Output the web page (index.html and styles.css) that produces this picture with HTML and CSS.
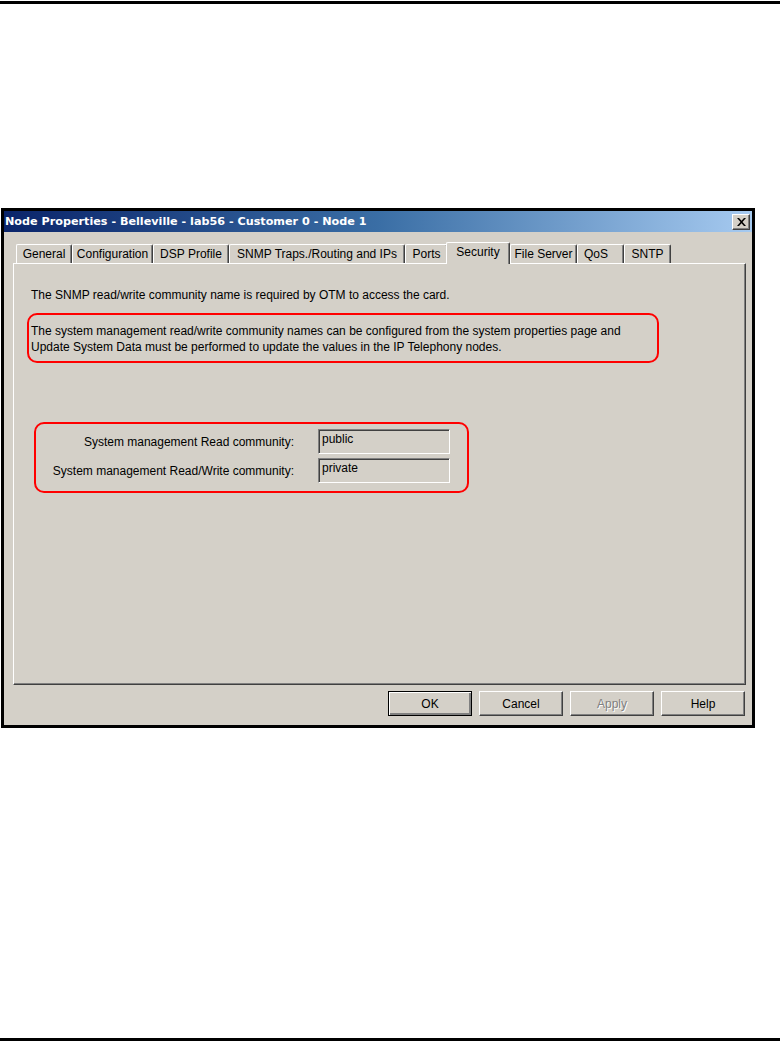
FILE: index.html
```html
<!DOCTYPE html>
<html>
<head>
<meta charset="utf-8">
<link rel="stylesheet" href="styles.css">
</head>
<body>
<div class="rule rule-top"></div>
<div class="dialog">
  <div class="titlebar">
    <span class="title">Node Properties - Belleville - lab56 - Customer 0 - Node 1</span>
    <span class="close-btn"><svg width="9" height="8" viewBox="0 0 9 8"><path d="M0 0h2l2.5 2.8L7 0h2L5.5 4 9 8H7L4.5 5.2 2 8H0l3.5-4z" fill="#000"/></svg></span>
  </div>
  <div class="dialog-body">
    <div class="tabs">
      <div class="tab">General</div>
      <div class="tab">Configuration</div>
      <div class="tab">DSP Profile</div>
      <div class="tab">SNMP Traps./Routing and IPs</div>
      <div class="tab">Ports</div>
      <div class="tab tab-active">Security</div>
      <div class="tab">File Server</div>
      <div class="tab tab-left">QoS</div>
      <div class="tab">SNTP</div>
    </div>
    <div class="panel">
      <p class="intro">The SNMP read/write community name is required by OTM to access the card.</p>
      <div class="note">
        <p>The system management read/write community names can be configured from the system properties page and</p>
        <p>Update System Data must be performed to update the values in the IP Telephony nodes.</p>
      </div>
      <div class="fields">
        <div class="field">
          <span class="label">System management Read community:</span>
          <span class="input">public</span>
        </div>
        <div class="field">
          <span class="label">System management Read/Write community:</span>
          <span class="input">private</span>
        </div>
      </div>
    </div>
    <div class="buttons">
      <span class="btn btn-default">OK</span>
      <span class="btn">Cancel</span>
      <span class="btn btn-disabled">Apply</span>
      <span class="btn">Help</span>
    </div>
  </div>
</div>
<div class="rule rule-bottom"></div>
</body>
</html>
```
FILE: styles.css
```css
html, body {
  margin: 0;
  padding: 0;
  background: #fff;
}
body {
  font-family: "Liberation Sans", Arial, sans-serif;
  font-size: 12px;
  color: #000;
  width: 780px;
  height: 1042px;
  overflow: hidden;
}
.rule {
  height: 3px;
  background: #000;
  width: 780px;
}
.rule-top {
  margin-top: 1px;
}
.rule-bottom {
  margin-top: 310px;
}
.dialog {
  margin-top: 204px;
  margin-left: 1px;
  width: 748px;
  border: 3px solid #000;
  background: #d4d0c8;
}
.titlebar {
  height: 21px;
  background: linear-gradient(to right, #0a246a 0%, #3a6ea5 50%, #a6caf0 100%);
  display: flex;
  align-items: center;
  justify-content: space-between;
  padding: 0 2px 0 1px;
}
.title {
  color: #fff;
  font-family: "DejaVu Sans", sans-serif;
  font-weight: bold;
  font-size: 11.2px;
}
.close-btn {
  width: 16px;
  height: 14px;
  background: #d4d0c8;
  border-top: 1px solid #fff;
  border-left: 1px solid #fff;
  border-right: 1px solid #404040;
  border-bottom: 1px solid #404040;
  box-shadow: inset -1px -1px 0 #808080;
  display: flex;
  align-items: center;
  justify-content: center;
}
.dialog-body {
  padding: 10px 6px 9px 9px;
}
.tabs {
  display: grid;
  grid-template-columns: 56px 81px 76px 176px 43px 62px 67px 47px 47px;
  height: 21px;
  align-items: end;
  padding-left: 3px;
  position: relative;
  z-index: 1;
}
.tab {
  height: 19px;
  box-sizing: border-box;
  border-top: 1px solid #fff;
  border-left: 1px solid #fff;
  border-right: 1px solid #404040;
  box-shadow: inset -1px 0 0 #808080;
  border-radius: 2px 2px 0 0;
  text-align: center;
  line-height: 18px;
  white-space: nowrap;
}
.tab-left {
  text-align: left;
  padding-left: 6px;
}
.tab-active {
  height: 22px;
  margin-bottom: -1px;
  margin-left: -2px;
  background: #d4d0c8;
  line-height: 19px;
}
.panel {
  height: 422px;
  box-sizing: border-box;
  border-top: 1px solid #fff;
  border-left: 1px solid #fff;
  border-right: 1px solid #404040;
  border-bottom: 1px solid #404040;
  box-shadow: inset -1px -1px 0 #808080;
  padding: 24px 0 0 13px;
}
.panel p {
  margin: 0;
}
.intro {
  padding-left: 4px;
  line-height: 14px;
}
.note {
  margin-top: 11px;
  width: 632px;
  height: 50px;
  border: 2px solid #f00;
  border-radius: 10px;
  padding: 8px 0 0 2px;
  box-sizing: border-box;
  line-height: 16px;
}
.fields {
  margin-top: 59px;
  margin-left: 7px;
  width: 435px;
  height: 71px;
  box-sizing: border-box;
  border: 2px solid #f00;
  border-radius: 10px;
  padding: 5px 0 0 0;
  display: flex;
  flex-direction: column;
  gap: 4px;
}
.field {
  display: flex;
  align-items: center;
}
.label {
  width: 258px;
  text-align: right;
}
.input {
  margin-left: 24px;
  width: 132px;
  height: 25px;
  box-sizing: border-box;
  border-top: 1px solid #808080;
  border-left: 1px solid #808080;
  border-right: 1px solid #fff;
  border-bottom: 1px solid #fff;
  box-shadow: inset 1px 1px 0 #404040;
  padding: 2px 0 0 3px;
  line-height: 14px;
  background: #d4d0c8;
}
.buttons {
  display: flex;
  justify-content: flex-end;
  gap: 7px;
  margin-top: 6px;
  padding-right: 1px;
}
.btn {
  width: 84px;
  height: 25px;
  box-sizing: border-box;
  border-top: 1px solid #fff;
  border-left: 1px solid #fff;
  border-right: 1px solid #404040;
  border-bottom: 1px solid #404040;
  box-shadow: inset -1px -1px 0 #808080;
  display: flex;
  align-items: center;
  justify-content: center;
}
.btn-default {
  border: 1px solid #000;
  box-shadow: inset 1px 1px 0 #fff, inset -2px -2px 0 #808080;
}
.btn-disabled {
  color: #808080;
  text-shadow: 1px 1px 0 #fff;
}
```
